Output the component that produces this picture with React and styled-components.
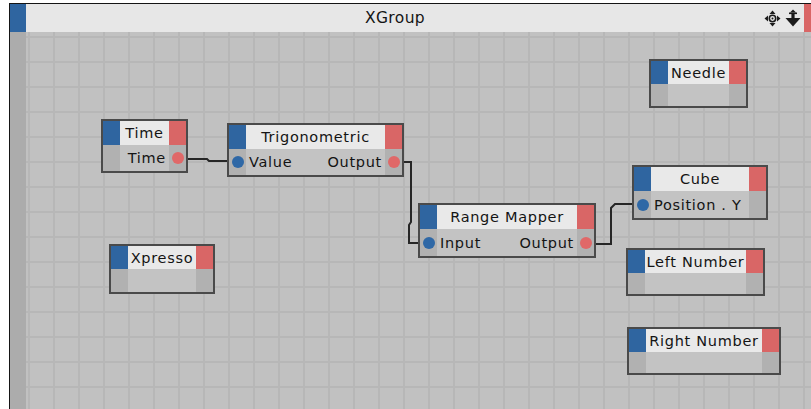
import React from 'react';
import styled, { createGlobalStyle } from 'styled-components';

const GlobalStyle = createGlobalStyle`
  html, body {
    margin: 0;
    padding: 0;
    background: #fff;
    overflow: hidden;
  }
  body {
    font-family: "DejaVu Sans", "Liberation Sans", sans-serif;
    color: #141414;
  }
`;

// canvas top-left in page coordinates, node data below is in page coords
const ORIGIN = { x: 26, y: 32 };
const BLUE = '#2f65a0';
const RED = '#d96666';

const Frame = styled.div`
  margin: 3px 0 0 9px;
  width: 810px;
  height: 406px;
  border-top: 1px solid #151515;
  border-left: 1px solid #151515;
  display: flex;
  flex-direction: column;
  overflow: hidden;
`;

const TitleBar = styled.div`
  display: flex;
  height: 28px;
  flex-shrink: 0;
  background: #e7e7e7;
`;

const Cap = styled.div`
  width: ${({ $w }) => $w || 16}px;
  flex-shrink: 0;
  background: ${({ $color }) => $color};
`;

const Title = styled.div`
  flex: 1;
  display: flex;
  align-items: center;
  justify-content: center;
  font-size: 15.5px;
  letter-spacing: 0.4px;
  color: #141414;
`;

const Tools = styled.div`
  display: flex;
  align-items: center;
  gap: 4px;
  padding: 0 3px 0 0;
`;

const Body = styled.div`
  flex: 1;
  display: flex;
`;

const LeftStrip = styled.div`
  width: 16px;
  flex-shrink: 0;
  background: #acacac;
`;

const Canvas = styled.div`
  flex: 1;
  position: relative;
  background-color: #c1c1c1;
  background-image:
    linear-gradient(to right, #b7b7b7 2px, transparent 2px),
    linear-gradient(to bottom, #b7b7b7 2px, transparent 2px);
  background-size: 25px 25px;
  background-position: 2px 4px;
`;

const Wires = styled.svg`
  position: absolute;
  left: 0;
  top: 0;
  width: 100%;
  height: 100%;
  overflow: visible;
`;

const NodeBox = styled.div`
  position: absolute;
  left: ${({ $x }) => $x - ORIGIN.x}px;
  top: ${({ $y }) => $y - ORIGIN.y}px;
  width: ${({ $w }) => $w}px;
  height: ${({ $h }) => $h}px;
  box-sizing: border-box;
  border: 2px solid #4a4a4a;
  display: grid;
  grid-template-columns: 17px 1fr 17px;
  grid-template-rows: ${({ $head }) => $head}px 1fr;
  background: #c3c3c3;
`;

const HeadCap = styled.div`
  background: ${({ $color }) => $color};
`;

const NodeTitle = styled.div`
  background: #e9e9e9;
  display: flex;
  align-items: center;
  justify-content: center;
  font-size: 14.5px;
  letter-spacing: 0.7px;
  white-space: nowrap;
  overflow: hidden;
`;

const Side = styled.div`
  background: #b1b1b1;
  display: flex;
  align-items: center;
  justify-content: center;
`;

const Ports = styled.div`
  display: flex;
  align-items: center;
  justify-content: space-between;
  padding: 0 3px 0 3px;
  font-size: 14.5px;
  letter-spacing: 0.7px;
  white-space: nowrap;
`;

const Dot = styled.span`
  width: 12px;
  height: 12px;
  border-radius: 50%;
  background: ${({ $color }) => $color};
`;

const nodes = [
  { title: 'Time', x: 101, y: 119, w: 87, h: 54, head: 24, output: 'Time' },
  { title: 'Trigonometric', x: 227, y: 123, w: 177, h: 54, head: 24, input: 'Value', output: 'Output' },
  { title: 'Range Mapper', x: 418, y: 203, w: 178, h: 55, head: 24, input: 'Input', output: 'Output' },
  { title: 'Cube', x: 632, y: 165, w: 136, h: 55, head: 24, input: 'Position . Y' },
  { title: 'Needle', x: 649, y: 59, w: 99, h: 49, head: 23 },
  { title: 'Left Number', x: 626, y: 248, w: 139, h: 48, head: 23 },
  { title: 'Right Number', x: 627, y: 327, w: 154, h: 48, head: 23 },
  { title: 'Xpresso', x: 109, y: 244, w: 106, h: 50, head: 23 },
];

const wires = [
  [[188, 159], [207, 159], [209, 161], [228, 161]],
  [[403, 162], [411, 162], [411, 222], [409, 225], [409, 243], [419, 243]],
  [[595, 244], [611, 244], [611, 208], [615, 204], [633, 204]],
];

const toPath = (pts) =>
  pts.map(([x, y], i) => `${i ? 'L' : 'M'}${x - ORIGIN.x} ${y - ORIGIN.y}`).join(' ');

const MoveIcon = () => (
  <svg width="17" height="17" viewBox="0 0 17 17">
    <path d="M8.5 0.5 L11.5 4 H5.5 Z M8.5 16.5 L11.5 13 H5.5 Z M0.5 8.5 L4 5.5 V11.5 Z M16.5 8.5 L13 5.5 V11.5 Z" fill="#1b1b1b" />
    <circle cx="8.5" cy="8.5" r="3.2" fill="none" stroke="#1b1b1b" strokeWidth="1.6" />
    <circle cx="8.5" cy="8.5" r="1" fill="#1b1b1b" />
  </svg>
);

const PinIcon = () => (
  <svg width="16" height="18" viewBox="0 0 16 18">
    <path d="M8 0.5 L11 3.5 H5 Z" fill="#1b1b1b" />
    <rect x="4" y="3.5" width="8" height="1.6" fill="#1b1b1b" />
    <rect x="6.4" y="4" width="3.2" height="6" fill="#1b1b1b" />
    <path d="M0.5 9 H15.5 L8 17.5 Z" fill="#1b1b1b" />
  </svg>
);

const Node = ({ title, x, y, w, h, head, input, output }) => (
  <NodeBox $x={x} $y={y} $w={w} $h={h} $head={head}>
    <HeadCap $color={BLUE} />
    <NodeTitle>{title}</NodeTitle>
    <HeadCap $color={RED} />
    <Side>{input && <Dot $color="#2f68a6" />}</Side>
    <Ports>
      <span>{input}</span>
      <span>{output}</span>
    </Ports>
    <Side>{output && <Dot $color="#e06868" />}</Side>
  </NodeBox>
);

const App = () => (
  <>
    <GlobalStyle />
    <Frame>
      <TitleBar>
        <Cap $color={BLUE} />
        <Title>XGroup</Title>
        <Tools>
          <MoveIcon />
          <PinIcon />
        </Tools>
        <Cap $color={RED} />
      </TitleBar>
      <Body>
        <LeftStrip />
        <Canvas>
          <Wires>
            {wires.map((pts, i) => (
              <path key={i} d={toPath(pts)} fill="none" stroke="#262626" strokeWidth="2" />
            ))}
          </Wires>
          {nodes.map((n) => (
            <Node key={n.title} {...n} />
          ))}
        </Canvas>
      </Body>
    </Frame>
  </>
);

export default App;
